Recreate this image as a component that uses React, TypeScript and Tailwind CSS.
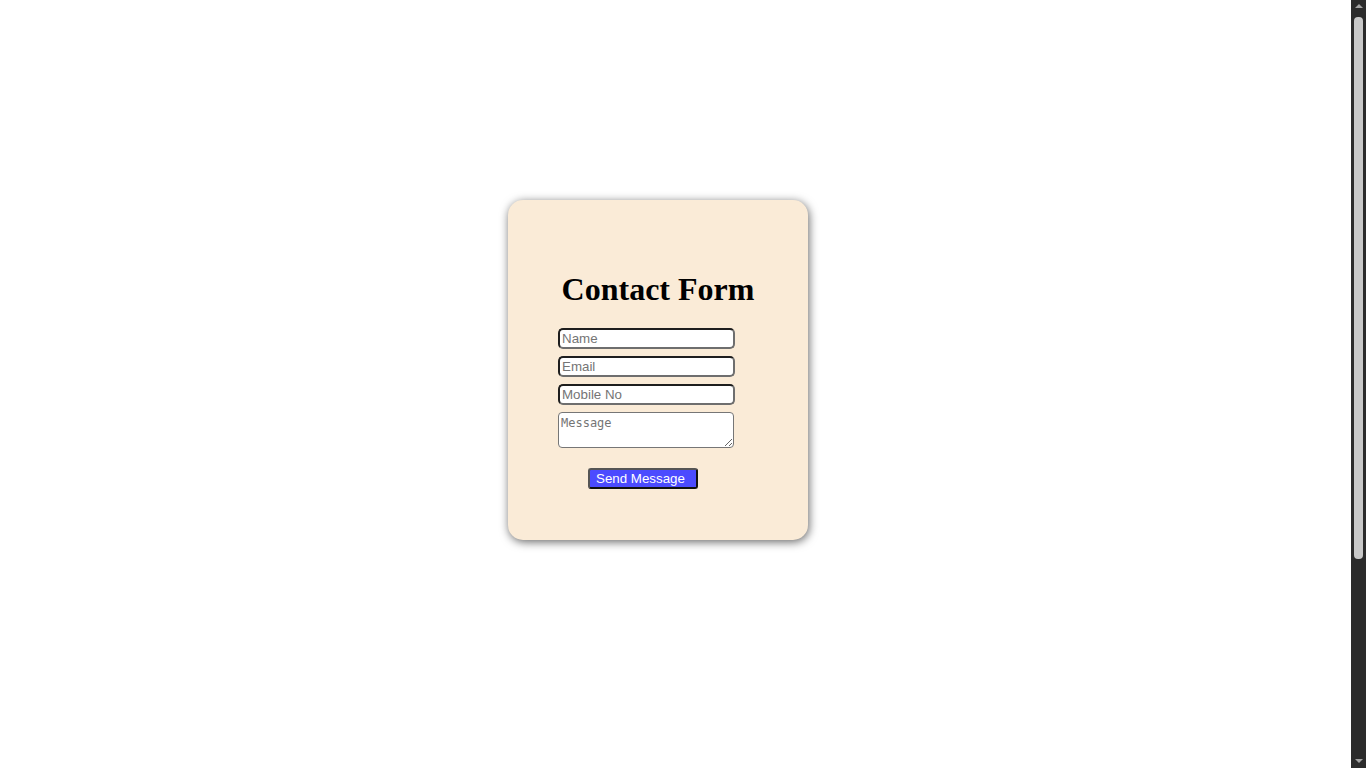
const inputCls =
  "block w-[177px] h-[21px] px-[2px] py-[1px] border-2 border-t-[#1e1e1e] border-l-[#1e1e1e] border-b-[#6e6e6e] border-r-[#6e6e6e] rounded-[5px] bg-white text-[13.33px] text-black placeholder:text-[#757575] outline-none font-['Liberation_Sans',Arial,sans-serif]";

function ScrollBar() {
  // stand-in for the browser's dark scrollbar seen in the screenshot
  return (
    <div className="fixed right-0 top-0 w-[15px] h-screen bg-[#2b2b2b] flex flex-col items-center">
      <div className="mt-[4px] w-0 h-0 border-x-[4px] border-x-transparent border-b-[4px] border-b-[#a3a3a3]" />
      <div className="mt-[9px] w-[9px] h-[542px] rounded-[4px] bg-[#c8c8c8]" />
      <div className="mt-auto mb-[5px] w-0 h-0 border-x-[4px] border-x-transparent border-t-[4px] border-t-[#a3a3a3]" />
    </div>
  );
}

export default function App() {
  return (
    <div className="min-h-[1040px] bg-white pt-[200px]">
      <div className="ml-[508px] w-[300px] h-[340px] rounded-[15px] bg-[#faebd7] shadow-[1px_2px_10px_rgba(0,0,0,0.6)] pt-[49px] px-[50px]">
        <h1 className="mt-[22px] mb-[20px] text-center text-[32px] leading-[37px] font-bold text-black font-['Liberation_Serif','Times_New_Roman',serif]">
          Contact Form
        </h1>
        <form className="flex flex-col gap-[7px]" onSubmit={(e) => e.preventDefault()}>
          <input type="text" placeholder="Name" className={inputCls} />
          <input type="email" placeholder="Email" className={inputCls} />
          <input type="tel" placeholder="Mobile No" className={inputCls} />
          <textarea
            placeholder="Message"
            className="block w-[176px] h-[36px] px-[2px] pt-[3px] pb-[1px] border border-[#767676] rounded-[4px] bg-white text-[12px] leading-[14px] text-black placeholder:text-[#757575] outline-none font-['DejaVu_Sans_Mono','Liberation_Mono',monospace]"
          />
          <div className="pt-[13px] pl-[30px]">
            <button
              type="submit"
              className="block w-[110px] h-[21px] pl-[6px] text-left border-2 border-t-[#555] border-l-[#555] border-b-[#111] border-r-[#111] rounded-[3px] bg-[#4b4bff] text-white text-[13.33px] leading-[15px] font-['Liberation_Sans',Arial,sans-serif]"
            >
              Send Message
            </button>
          </div>
        </form>
      </div>
      <ScrollBar />
    </div>
  );
}
